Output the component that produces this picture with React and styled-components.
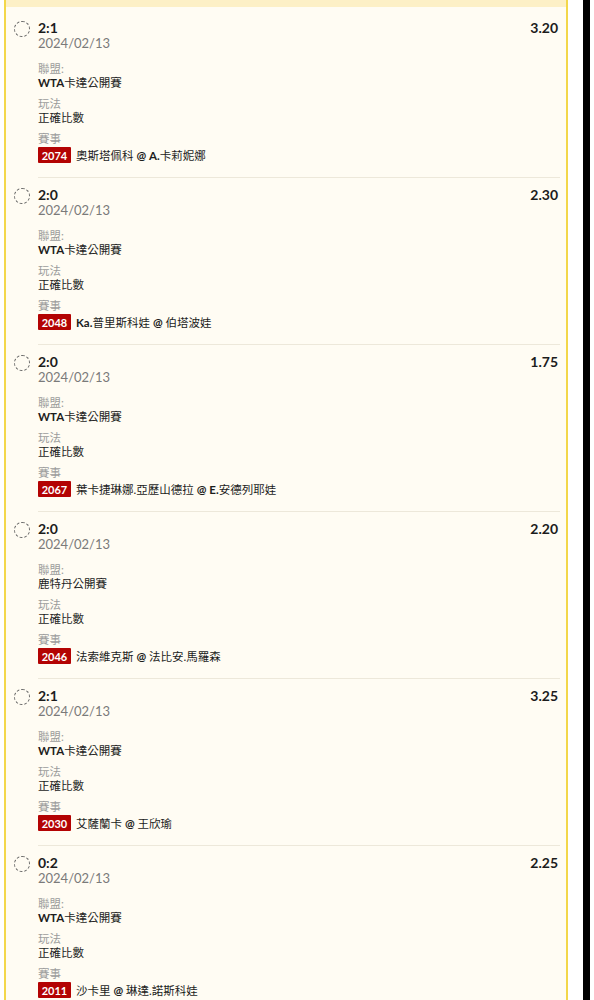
import React from "react";
import styled, { createGlobalStyle } from "styled-components";

const GlobalStyle = createGlobalStyle`
  body {
    margin: 0;
    background: #ffffff;
    font-family: Lato, "Noto Sans CJK TC", sans-serif;
    color: #1c1c1c;
  }
`;

const Page = styled.div`
  display: flex;
  align-items: stretch;
  min-height: 1000px;
`;

const Panel = styled.div`
  margin-left: 4px;
  width: 560px;
  border-left: 2px solid #f3d74a;
  border-right: 2px solid #f3d74a;
  background: #fffcf3;
`;

const TopStrip = styled.div`
  height: 7px;
  background: #fdf0c6;
`;

const List = styled.div`
  padding: 4px 6px 0 8px;
`;

const Item = styled.div`
  display: flex;
  align-items: flex-start;
  gap: 8px;
`;

const Radio = styled.span`
  flex: none;
  width: 14px;
  height: 14px;
  margin-top: 10px;
  border: 1px dashed #666;
  border-radius: 50%;
`;

const Body = styled.div`
  flex: 1;
  padding: 9px 0 13px;
  border-bottom: 1px solid #ede8da;
`;

const Head = styled.div`
  display: flex;
  justify-content: space-between;
  align-items: center;
  height: 16px;
`;

const Score = styled.span`
  font-size: 14px;
  font-weight: 700;
  line-height: 16px;
`;

const Odds = styled(Score)`
  margin-right: 2px;
`;

const DateText = styled.div`
  font-size: 13px;
  line-height: 14px;
  color: #7a7a7a;
  margin-bottom: 12px;
`;

const Field = styled.div`
  & + & {
    margin-top: 7px;
  }
`;

const Label = styled.div`
  font-size: 11.5px;
  line-height: 14px;
  color: #9c9c9c;
`;

const Value = styled.div`
  font-size: 11.5px;
  line-height: 14px;
  color: #1c1c1c;
`;

const Latin = styled.span`
  font-weight: 700;
`;

const MatchRow = styled.div`
  display: flex;
  align-items: center;
  gap: 5px;
  height: 18px;
  font-size: 11.5px;
`;

const Badge = styled.span`
  display: inline-flex;
  align-items: center;
  justify-content: center;
  width: 33px;
  height: 16px;
  background: #b30303;
  color: #fff;
  font-weight: 700;
  font-size: 11px;
  border-radius: 1px;
`;

const Gap = styled.div`
  width: 15px;
`;

const Bar = styled.div`
  width: 7px;
  background: #000;
`;

// latin runs (names, @) come out heavier than the CJK text
const Mixed = ({ text }) =>
  text
    .split(/([A-Za-z@]+\.?)/)
    .filter(Boolean)
    .map((part, i) =>
      /[A-Za-z@]/.test(part) ? <Latin key={i}>{part}</Latin> : <span key={i}>{part}</span>
    );

const bets = [
  { score: "2:1", odds: "3.20", league: "WTA卡達公開賽", id: "2074", match: "奧斯塔佩科 @ A.卡莉妮娜" },
  { score: "2:0", odds: "2.30", league: "WTA卡達公開賽", id: "2048", match: "Ka.普里斯科娃 @ 伯塔波娃" },
  { score: "2:0", odds: "1.75", league: "WTA卡達公開賽", id: "2067", match: "葉卡捷琳娜.亞歷山德拉 @ E.安德列耶娃" },
  { score: "2:0", odds: "2.20", league: "鹿特丹公開賽", id: "2046", match: "法索維克斯 @ 法比安.馬羅森" },
  { score: "2:1", odds: "3.25", league: "WTA卡達公開賽", id: "2030", match: "艾薩蘭卡 @ 王欣瑜" },
  { score: "0:2", odds: "2.25", league: "WTA卡達公開賽", id: "2011", match: "沙卡里 @ 琳達.諾斯科娃" },
];

export default function App() {
  return (
    <Page>
      <GlobalStyle />
      <Panel>
        <TopStrip />
        <List>
          {bets.map((b, i) => (
            <Item key={i}>
              <Radio />
              <Body>
                <Head>
                  <Score>{b.score}</Score>
                  <Odds>{b.odds}</Odds>
                </Head>
                <DateText>2024/02/13</DateText>
                <Field>
                  <Label>聯盟:</Label>
                  <Value>
                    <Mixed text={b.league} />
                  </Value>
                </Field>
                <Field>
                  <Label>玩法</Label>
                  <Value>正確比數</Value>
                </Field>
                <Field>
                  <Label>賽事</Label>
                  <MatchRow>
                    <Badge>{b.id}</Badge>
                    <span>
                      <Mixed text={b.match} />
                    </span>
                  </MatchRow>
                </Field>
              </Body>
            </Item>
          ))}
        </List>
      </Panel>
      <Gap />
      <Bar />
    </Page>
  );
}
